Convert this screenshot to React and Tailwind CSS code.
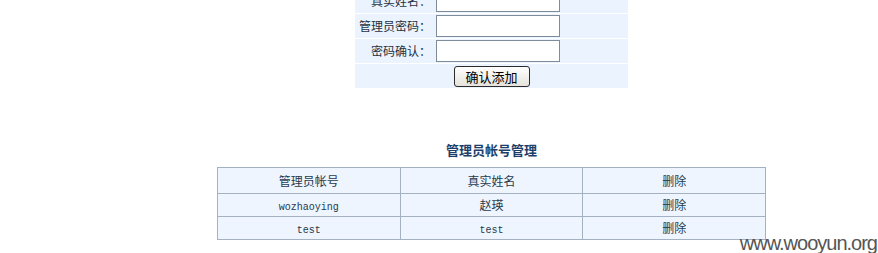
const CJK = { fontFamily: '"Noto Sans CJK SC", "Liberation Sans", sans-serif' };

const admins = [
  { user: "wozhaoying", name: "赵瑛" },
  { user: "test", name: "test" },
];

function Latin({ children }) {
  // 英文字段用等宽字体，接近宋体里的半角宽度
  if (/^[\x00-\x7f]+$/.test(children)) {
    return <span className="font-['Liberation_Mono',monospace] text-[10px]">{children}</span>;
  }
  return <span>{children}</span>;
}

function FormRow({ label }) {
  return (
    <div className="flex h-6 items-center bg-[#ebf3fe]">
      <div className="w-[79px] pr-[3px] text-right text-[12px] text-[#24313f]">{label}</div>
      <input
        type="text"
        className="ml-[2px] h-[22px] w-[124px] border border-[#7f8c9a] bg-white outline-none"
      />
    </div>
  );
}

export default function App() {
  return (
    <div className="relative h-[253px] w-[878px] overflow-hidden bg-white" style={CJK}>
      <div className="w-[983px]">
        {/* 添加管理员表单 */}
        <div className="mx-auto -mt-[11px] flex w-[273px] flex-col gap-[1px]">
          <FormRow label="真实姓名：" />
          <FormRow label="管理员密码：" />
          <FormRow label="密码确认：" />
          <div className="flex h-6 items-center justify-center bg-[#ebf3fe]">
            <button className="flex h-[21px] w-[76px] items-center justify-center rounded-[3px] border border-[#2b2b2b] bg-gradient-to-b from-[#ffffff] to-[#e4e2da] text-[13px] leading-none text-black">
              确认添加
            </button>
          </div>
        </div>

        {/* 管理员列表 */}
        <div className="mt-[54px] text-center text-[13px] font-bold leading-[16px] text-[#1e3f6b]">
          管理员帐号管理
        </div>
        <table className="mx-auto mt-[9px] w-[549px] table-fixed border-collapse bg-[#eef5fe] text-[12px] text-[#1f3a4e]">
          <tbody>
            <tr className="h-[26px]">
              <td className="border border-[#a3b1c2] text-center">管理员帐号</td>
              <td className="border border-[#a3b1c2] text-center">真实姓名</td>
              <td className="border border-[#a3b1c2] text-center">删除</td>
            </tr>
            {admins.map((a) => (
              <tr key={a.user} className="h-[23px]">
                <td className="border border-[#a3b1c2] text-center">
                  <Latin>{a.user}</Latin>
                </td>
                <td className="border border-[#a3b1c2] text-center">
                  <Latin>{a.name}</Latin>
                </td>
                <td className="border border-[#a3b1c2] text-center">删除</td>
              </tr>
            ))}
          </tbody>
        </table>
      </div>

      <div className="absolute right-[1px] bottom-[-1px] font-['Liberation_Sans',sans-serif] text-[20px] leading-[22px] tracking-[-1px] text-[#555]">
        www.wooyun.org
      </div>
    </div>
  );
}
